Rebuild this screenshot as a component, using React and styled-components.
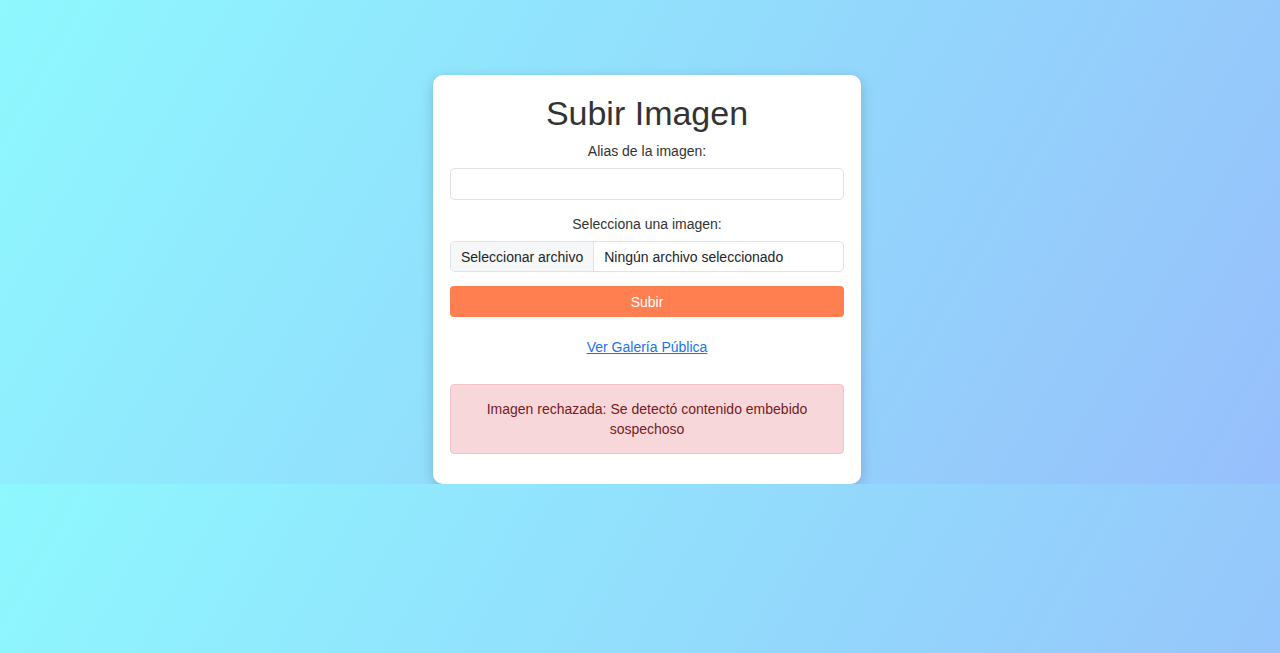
import React, { useState } from 'react';
import styled, { createGlobalStyle } from 'styled-components';

const GlobalStyle = createGlobalStyle`
  html, body {
    margin: 0;
  }

  body {
    padding: 75px 0 0 14px;
    font-family: 'Liberation Sans', Arial, sans-serif;
    background: linear-gradient(120deg, #8ef8fe 0%, #97bffb 100%);
  }
`;

const Card = styled.div`
  box-sizing: border-box;
  width: 428px;
  margin: 0 auto;
  padding: 18px 17px 30px;
  background: #fff;
  border-radius: 10px;
  box-shadow: 0 4px 14px rgba(0, 0, 0, 0.18);
  display: flex;
  flex-direction: column;
  text-align: center;
`;

const Title = styled.h1`
  margin: 0 0 8px;
  font-size: 34px;
  line-height: 40px;
  font-weight: 400;
  color: #333;
`;

const Label = styled.label`
  display: block;
  margin: ${p => p.$top || 0}px 0 7px;
  font-size: 14px;
  line-height: 20px;
  color: #333;
`;

const TextInput = styled.input`
  box-sizing: border-box;
  width: 100%;
  height: 32px;
  padding: 0 10px;
  border: 1px solid #dfe2e6;
  border-radius: 5px;
  font: 14px 'Liberation Sans', Arial, sans-serif;
  outline: none;
`;

const FileField = styled.label`
  box-sizing: border-box;
  display: flex;
  height: 31px;
  border: 1px solid #dfe2e6;
  border-radius: 5px;
  overflow: hidden;
  font-size: 14px;
  color: #212529;
  cursor: pointer;
`;

const FileButton = styled.span`
  display: flex;
  align-items: center;
  padding: 0 10px;
  background: #f6f7f9;
  border-right: 1px solid #dfe2e6;
`;

const FileName = styled.span`
  display: flex;
  align-items: center;
  padding: 0 10px;
`;

const SubmitButton = styled.button`
  height: 31px;
  margin-top: 14px;
  border: none;
  border-radius: 4px;
  background: #ff7f50;
  color: #fff;
  font: 14px 'Liberation Sans', Arial, sans-serif;
  cursor: pointer;
`;

const GalleryLink = styled.a`
  align-self: center;
  margin-top: 20px;
  font-size: 14px;
  line-height: 20px;
  color: #1a73e8;
  text-decoration: underline;
`;

const Alert = styled.div`
  margin-top: 27px;
  padding: 14px 20px;
  background: #f8d7da;
  border: 1px solid #f5c2c7;
  border-radius: 4px;
  color: #721c24;
  font-size: 14px;
  line-height: 20px;
`;

const App = () => {
  const [alias, setAlias] = useState('');

  return (
    <>
      <GlobalStyle />
      <Card>
        <Title>Subir Imagen</Title>
        <Label htmlFor="alias">Alias de la imagen:</Label>
        <TextInput
          id="alias"
          value={alias}
          onChange={e => setAlias(e.target.value)}
        />
        <Label $top={14}>Selecciona una imagen:</Label>
        <FileField>
          <FileButton>Seleccionar archivo</FileButton>
          <FileName>Ningún archivo seleccionado</FileName>
        </FileField>
        <SubmitButton type="button">Subir</SubmitButton>
        <GalleryLink href="#galeria">Ver Galería Pública</GalleryLink>
        <Alert>Imagen rechazada: Se detectó contenido embebido sospechoso</Alert>
      </Card>
    </>
  );
};

export default App;
